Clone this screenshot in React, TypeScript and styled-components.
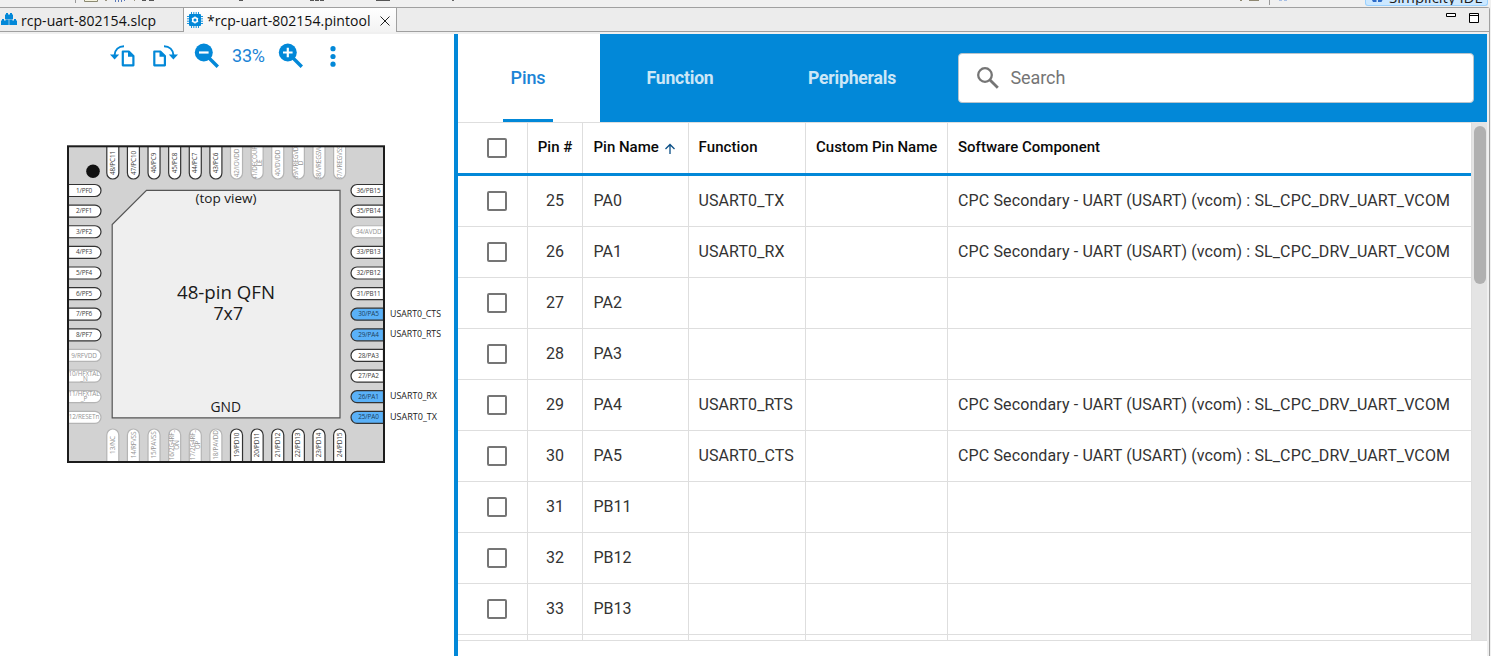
import React from "react";
import styled, { createGlobalStyle, css } from "styled-components";

const BLUE = "#0288d8";
const LINE = "#dedede";

const GlobalStyle = createGlobalStyle`
  * { box-sizing: border-box; }
  html, body { margin: 0; padding: 0; overflow: hidden; background: #fff; }
  svg { display: block; flex: none; }
`;

const Window = styled.div`
  display: flex;
  flex-direction: column;
  width: 1491px;
  height: 656px;
  overflow: hidden;
  background: #f0f0f0;
  font-family: Roboto, "Liberation Sans", sans-serif;
`;

const ToolStrip = styled.div`
  display: flex;
  justify-content: space-between;
  height: 7px;
  flex: none;
  overflow: hidden;
  background: #f0f0f0;
`;

const Perspective = styled.div`
  display: flex;
  align-items: flex-end;
  width: 123px;
  height: 6px;
  margin-right: 3px;
  padding-left: 6px;
  overflow: hidden;
  background: #cce8ff;
  border: 1px solid #99d1ff;
  border-top: 0;
  border-radius: 0 0 3px 3px;
`;

const PerspectiveIcon = styled.svg`
  align-self: flex-start;
`;

const PerspectiveName = styled.span`
  margin: 0 0 -2px 6px;
  font: 15px/20px "Open Sans", "Noto Sans", sans-serif;
  color: #1b1b1b;
  white-space: nowrap;
`;

const Frame = styled.div`
  display: flex;
  flex-direction: column;
  flex: 1;
  min-height: 0;
  width: 1490px;
  border-top: 1px solid #a0a0a0;
  border-right: 1px solid #a0a0a0;
  border-top-right-radius: 3px;
`;

const EditorTabs = styled.div`
  display: flex;
  height: 24px;
  flex: none;
  background: #ececec;
  border-bottom: 1px solid #a0a0a0;
`;

const EditorTab = styled.div<{ $active?: boolean }>`
  display: flex;
  align-items: center;
  height: ${(p) => (p.$active ? 24 : 23)}px;
  width: ${(p) => (p.$active ? 214 : 183)}px;
  padding-left: ${(p) => (p.$active ? 3 : 1)}px;
  font: 14px/20px "Open Sans", "Noto Sans", sans-serif;
  color: #111;
  white-space: nowrap;
  ${(p) =>
    p.$active &&
    css`
      background: linear-gradient(#fff, #f3f3f3);
      border-left: 1px solid #a0a0a0;
      border-right: 1px solid #a0a0a0;
    `}
`;

const TabTitle = styled.span`
  margin-left: 4px;
  padding-top: 2px;
  letter-spacing: 0.04px;
`;

const CloseIcon = styled.svg`
  margin: 1px 0 0 9px;
`;

const WindowControls = styled.div`
  display: flex;
  margin: 5px 10px 0 auto;
  gap: 13px;
`;

const Workspace = styled.div`
  display: flex;
  flex: 1;
  min-height: 0;
  margin: 2px 2px 0 0;
  background: #fff;
`;

const DiagramPane = styled.div`
  width: 454px;
  flex: none;
`;

const Toolbar = styled.div`
  display: flex;
  align-items: center;
  height: 44px;
  padding-left: 110px;
`;

const ToolButton = styled.span<{ $after: number }>`
  display: flex;
  margin-right: ${(p) => p.$after}px;
`;

const ZoomLevel = styled.span`
  width: 46px;
  font-size: 18px;
  line-height: 24px;
  letter-spacing: -0.2px;
  color: #1b84d6;
`;

const PinPane = styled.div`
  display: flex;
  flex-direction: column;
  flex: 1;
  min-width: 0;
  border-left: 4px solid ${BLUE};
`;

const PinHeader = styled.div`
  display: flex;
  height: 88px;
  flex: none;
  background: ${BLUE};
`;

const ViewTab = styled.div<{ $width: number; $active?: boolean }>`
  display: flex;
  flex-direction: column;
  align-items: center;
  width: ${(p) => p.$width}px;
  padding-right: ${(p) => (p.$active ? 2 : 0)}px;
  font-size: ${(p) => (p.$active ? 18 : 17.6)}px;
  font-weight: ${(p) => (p.$active ? 500 : 700)};
  letter-spacing: ${(p) => (p.$active ? -0.1 : -0.22)}px;
  color: ${(p) => (p.$active ? "#1b84d6" : "#cce7f7")};
  background: ${(p) => (p.$active ? "#fff" : "transparent")};
`;

const ViewLabel = styled.span`
  margin-top: auto;
  line-height: 24px;
`;

const ViewUnderline = styled.span<{ $on?: boolean }>`
  width: 50px;
  height: 3px;
  margin-top: 29px;
  background: ${(p) => (p.$on ? BLUE : "transparent")};
`;

const SearchBox = styled.div`
  display: flex;
  align-items: center;
  width: 516px;
  height: 50px;
  margin: 19px 13px 0 auto;
  padding: 0 0 1px 17px;
  gap: 10.5px;
  background: #fff;
  border: 1px solid #b9c4cc;
  border-radius: 4px;
  font-size: 18px;
  line-height: 22px;
  letter-spacing: -0.1px;
  color: #757575;
`;

const TableArea = styled.div`
  display: flex;
  height: 519px;
  flex: none;
  overflow: hidden;
  border-bottom: 1px solid ${LINE};
`;

const Table = styled.div`
  width: 1014px;
  flex: none;
  border-right: 1px solid ${LINE};
`;

const Row = styled.div<{ $head?: boolean }>`
  display: grid;
  grid-template-columns: 70px 55px 106px 117px 142px 1fr;
  height: ${(p) => (p.$head ? 54 : 51)}px;
  border-bottom: ${(p) => (p.$head ? `3px solid ${BLUE}` : `1px solid ${LINE}`)};
  border-top: ${(p) => (p.$head ? `1px solid ${LINE}` : "0")};
  font-size: ${(p) => (p.$head ? 15 : 16)}px;
  font-weight: ${(p) => (p.$head ? 500 : 400)};
  color: ${(p) => (p.$head ? "#0a0a0a" : "#333")};
`;

const Cell = styled.div<{ $center?: boolean }>`
  display: flex;
  align-items: center;
  justify-content: ${(p) => (p.$center ? "center" : "flex-start")};
  min-width: 0;
  padding: 0 0 2px ${(p) => (p.$center ? 0 : 10)}px;
  border-right: 1px solid ${LINE};
  white-space: nowrap;
  &:last-child { border-right: 0; }
`;

const CheckCell = styled(Cell)`
  padding: 0 0 0 29px;
`;

const NameCell = styled(Cell)`
  padding-left: 10.5px;
`;

const FunctionCell = styled(Cell)`
  padding-left: 9.5px;
  letter-spacing: 0.1px;
`;

const ComponentCell = styled(Cell)`
  letter-spacing: 0.125px;
`;

const Checkbox = styled.span`
  width: 20px;
  height: 20px;
  border: 2px solid #757575;
  border-radius: 2px;
`;

const ScrollTrack = styled.div`
  width: 15px;
  padding: 4px 1px 0 2px;
  background: #e4e4e4;
`;

const ScrollThumb = styled.div`
  height: 158px;
  border-radius: 6px;
  background: #b0b0b0;
`;

const PITCH = 20.62;
const USED = new Set(["30/PA5", "29/PA4", "26/PA1", "25/PA0"]);

type Side = "left" | "right" | "top" | "bottom";
type PinDef = { lines: string[]; muted?: boolean };

const pin = (name: string): PinDef =>
  name.startsWith("~") ? { lines: name.slice(1).split("|"), muted: true } : { lines: [name] };

const PINS: Record<Side, PinDef[]> = {
  left: ["1/PF0", "2/PF1", "3/PF2", "4/PF3", "5/PF4", "6/PF5", "7/PF6", "8/PF7", "~9/RFVDD", "~10/HFXTAL|_N", "~11/HFXTAL|_P", "~12/RESETn"].map(pin),
  right: ["36/PB15", "35/PB14", "~34/AVDD", "33/PB13", "32/PB12", "31/PB11", "30/PA5", "29/PA4", "28/PA3", "27/PA2", "26/PA1", "25/PA0"].map(pin),
  top: ["48/PC11", "47/PC10", "46/PC9", "45/PC8", "44/PC7", "43/PC6", "~42/IOVDD", "~41/DECOUP|LE", "~40/DVDD", "~39/VREGVD|D", "~38/VREGSW", "~37/VREGVSS"].map(pin),
  bottom: ["~13/NC", "~14/RFVSS", "~15/PAVSS", "~16/2G4RF_|ON", "~17/2G4RF_|OP", "~18/PAVDD", "19/PD10", "20/PD11", "21/PD12", "22/PD13", "23/PD14", "24/PD15"].map(pin),
};

const SHAPES: Record<Side, string> = {
  left: "M0 -6H26.500a6 6 0 0 1 0 12H0Z",
  right: "M0 -6H-26.500a6 6 0 0 0 0 12H0Z",
  top: "M-6 0V26.500a6 6 0 0 0 12 0V0Z",
  bottom: "M-6 0V-26.500a6 6 0 0 1 12 0V0Z",
};

function Pin({ side, index, def }: { side: Side; index: number; def: PinDef }) {
  const step = index * PITCH;
  const [x, y, tx, ty] = {
    left: [68.5, 190.5 + step, 15.5, 0],
    right: [383.5, 190.5 + step, -15, 0],
    top: [112.8 + step, 146.5, 0, 16.5],
    bottom: [112.8 + step, 461.5, 0, -16.5],
  }[side];
  const vertical = side === "top" || side === "bottom";
  const used = USED.has(def.lines[0]);
  return (
    <g transform={`translate(${x} ${y})`}>
      <clipPath id={`${side}${index}`}>
        <path d={SHAPES[side]} />
      </clipPath>
      <path d={SHAPES[side]} fill={used ? "#5ab1f8" : "#fff"} stroke={def.muted ? "#b4b4b4" : "#333"} strokeWidth={1.2} />
      <g clipPath={`url(#${side}${index})`}>
        <g transform={`translate(${tx} ${ty})${vertical ? " rotate(-90)" : ""}`} fontSize={6.4} letterSpacing={-0.15} textAnchor="middle" fill={def.muted ? "#949494" : used ? "#1d3f5c" : "#3c3c3c"}>
          {def.lines.map((line, i) => (
            <text key={i} y={def.lines.length > 1 ? -0.5 + i * 5.2 : 2.1}>
              {line}
            </text>
          ))}
        </g>
      </g>
    </g>
  );
}

function Label({ x, y, size, width, children }: { x: number; y: number; size: number; width: number; children: string }) {
  return (
    <text x={x} y={y} fontSize={size} textLength={width} lengthAdjust="spacingAndGlyphs" fill="#1a1a1a">
      {children}
    </text>
  );
}

function ChipDiagram() {
  return (
    <svg width="454" height="420" viewBox="0 78 454 420" fontFamily='"Open Sans", "Noto Sans", sans-serif'>
      <rect x="68" y="146.500" width="316" height="315.500" fill="#d2d2d2" />
      {(Object.keys(PINS) as Side[]).map((side) =>
        PINS[side].map((def, i) => <Pin key={side + i} side={side} index={i} def={def} />)
      )}
      <rect x="68" y="146.300" width="316" height="315.700" fill="none" stroke="#1c1c1c" strokeWidth="2" />
      <path d="M146.500 190.300H340V417.800H112.200V224.500Z" fill="#efefef" stroke="#555" strokeWidth="1.200" />
      <circle cx="93" cy="171.300" r="6.800" fill="#111" />
      <Label x={195.5} y={203} size={13} width={61}>(top view)</Label>
      <Label x={177} y={299} size={18.6} width={98}>48-pin QFN</Label>
      <Label x={213.5} y={320} size={18.6} width={29.5}>7x7</Label>
      <Label x={210.500} y={412} size={14} width={30.5}>GND</Label>
      <Label x={390} y={317} size={8.6} width={51}>USART0_CTS</Label>
      <Label x={390} y={337} size={8.6} width={51}>USART0_RTS</Label>
      <Label x={390} y={399} size={8.6} width={47}>USART0_RX</Label>
      <Label x={390} y={420} size={8.6} width={47}>USART0_TX</Label>
    </svg>
  );
}

const RotateIcon = ({ flip }: { flip?: boolean }) => (
  <svg width="26" height="24" viewBox="0 0 26 24">
    <g transform={flip ? "translate(25 0) scale(-1 1)" : undefined} fill="none" stroke={BLUE}>
      <path d="M14 2.300C8.500 2.300 5 6 4.600 11" strokeWidth="2" />
      <path d="M0 10.500H9.200L4.600 15.600Z" fill={BLUE} stroke="none" />
    </g>
    <g transform={flip ? "translate(-11.500 0)" : undefined}>
      <path d="M12.800 7.500H18.800L23.400 12V21.300H12.800Z" fill="none" stroke={BLUE} strokeWidth="2.200" strokeLinejoin="round" />
      <path d="M18 7V12.800H23.800Z" fill={BLUE} />
    </g>
  </svg>
);

const MagnifierIcon = ({ plus }: { plus?: boolean }) => (
  <svg width="26" height="26" viewBox="0 0 26 26">
    <path d="M14 14L23.800 23.800" stroke={BLUE} strokeWidth="3.400" />
    <circle cx="9.800" cy="9.500" r="9" fill={BLUE} />
    <path d={plus ? "M5 9.500H14.600M9.800 4.700V14.300" : "M5 9.500H14.600"} stroke="#fff" strokeWidth="2.200" />
  </svg>
);

const ChipIcon = () => (
  <svg width="16" height="16" viewBox="0 0 16 16">
    <path d="M4.500 0V16M6.800 0V16M9.200 0V16M11.500 0V16M0 4.500H16M0 6.800H16M0 9.200H16M0 11.500H16" stroke={BLUE} strokeWidth="0.900" />
    <rect x="2" y="2" width="12" height="12" rx="1" fill={BLUE} />
    <circle cx="8" cy="8" r="2.300" fill="none" stroke="#fff" strokeWidth="1.500" />
    <path d="M8 4.400V5.500M8 10.500V11.600M4.900 6.200L5.900 6.800M10.100 9.200L11.100 9.800M4.900 9.800L5.900 9.200M10.100 6.800L11.100 6.200" stroke="#fff" strokeWidth="1.300" />
  </svg>
);

const BlocksIcon = () => (
  <svg width="16" height="13" viewBox="0 0 16 13">
    <path d="M4 1.500H5V0H7V1.500H9V0H11V1.500H12V6.200H4Z" fill={BLUE} />
    <path d="M0 7.500H1V6H3V7.500H4.700V6.500H7.700V12H0ZM8.300 6.500H11.300V7.500H13V6H15V7.500H16V12H8.300Z" fill={BLUE} />
  </svg>
);

const ROWS: [number, string, string][] = [
  [25, "PA0", "USART0_TX"],
  [26, "PA1", "USART0_RX"],
  [27, "PA2", ""],
  [28, "PA3", ""],
  [29, "PA4", "USART0_RTS"],
  [30, "PA5", "USART0_CTS"],
  [31, "PB11", ""],
  [32, "PB12", ""],
  [33, "PB13", ""],
];

const SortIcon = () => (
  <svg width="12" height="12" viewBox="0 0 12 12">
    <path d="M6 11V1.500M1.500 6L6 1.500L10.500 6" fill="none" stroke="#0b4f86" strokeWidth="1.300" />
  </svg>
);

const SortableLabel = styled.span`
  display: flex;
  align-items: center;
  gap: 5.5px;
  svg { margin-top: 4px; }
`;

export default function App() {
  return (
    <>
      <GlobalStyle />
      <Window>
        <ToolStrip>
          <svg width="1300" height="7" viewBox="0 0 1300 7">
            <path d="M75 0H76V3H75ZM1269 0H1270V5H1269Z" fill="#999" />
            <path d="M84.500 0V1.500H97.500V0" fill="#f6f4e0" stroke="#8c8a72" />
            <path d="M105 0H107V1H105ZM134 0H135V1H134Z" fill="#9a9480" />
            <path d="M115 0H116V2H115ZM118 0H119V2H118ZM121 0H122V2H121ZM124 0H125V1H124Z" fill="#5a78b8" />
            <path d="M142 0H146V1H142ZM149 0H154V1H149ZM310 0H314V1H310ZM315 0H319V1H315ZM320 0H324V1H320ZM376 0H390V1H376ZM239 0H243V1H239Z" fill="#555" />
            <path d="M452 0H454V1H452Z" fill="#666" />
            <path d="M1249 0H1259V1H1249ZM1240 0H1242V1H1240Z" fill="#8f8872" />
            <path d="M1279 0H1282V1H1279ZM1284 0H1287V1H1284Z" fill="#a9c0e4" />
          </svg>
          <Perspective>
            <PerspectiveIcon width="11" height="2" viewBox="0 0 11 2">
              <path d="M0 0H4.500V2H1ZM6 0H10.500L9.500 2H6Z" fill="#2c6bc9" />
            </PerspectiveIcon>
            <PerspectiveName>Simplicity IDE</PerspectiveName>
          </Perspective>
        </ToolStrip>
        <Frame>
          <EditorTabs>
            <EditorTab>
              <BlocksIcon />
              <TabTitle>rcp-uart-802154.slcp</TabTitle>
            </EditorTab>
            <EditorTab $active>
              <ChipIcon />
              <TabTitle>*rcp-uart-802154.pintool</TabTitle>
              <CloseIcon width="10" height="10" viewBox="0 0 10 10">
                <path d="M0.500 0.500L9.500 9.500M9.500 0.500L0.500 9.500" stroke="#222" strokeWidth="1" />
              </CloseIcon>
            </EditorTab>
            <WindowControls>
              <svg width="10" height="12" viewBox="0 0 10 12">
                <path d="M0.500 0.500H9.500V3.500H0.500Z" fill="#fff" stroke="#000" />
              </svg>
              <svg width="10" height="12" viewBox="0 0 10 12">
                <path d="M0.500 0.500H9.500V9.500H0.500ZM0 2.500H10" fill="#fff" stroke="#000" />
              </svg>
            </WindowControls>
          </EditorTabs>
          <Workspace>
            <DiagramPane>
              <Toolbar>
                <ToolButton $after={17}><RotateIcon /></ToolButton>
                <ToolButton $after={15}><RotateIcon flip /></ToolButton>
                <ToolButton $after={12}><MagnifierIcon /></ToolButton>
                <ZoomLevel>33%</ZoomLevel>
                <ToolButton $after={26}><MagnifierIcon plus /></ToolButton>
                <svg width="6" height="21" viewBox="0 0 6 21">
                  <g fill={BLUE}>
                    <circle cx="3" cy="2.700" r="2.600" />
                    <circle cx="3" cy="10.500" r="2.600" />
                    <circle cx="3" cy="18.200" r="2.600" />
                  </g>
                </svg>
              </Toolbar>
              <ChipDiagram />
            </DiagramPane>
            <PinPane>
              <PinHeader>
                <ViewTab $width={142} $active><ViewLabel>Pins</ViewLabel><ViewUnderline $on /></ViewTab>
                <ViewTab $width={160}><ViewLabel>Function</ViewLabel><ViewUnderline /></ViewTab>
                <ViewTab $width={184}><ViewLabel>Peripherals</ViewLabel><ViewUnderline /></ViewTab>
                <SearchBox>
                  <svg width="24" height="24" viewBox="0 0 24 24">
                    <circle cx="9" cy="9" r="6.800" fill="none" stroke="#757575" strokeWidth="2.300" />
                    <path d="M14 14L21.800 21.800" stroke="#757575" strokeWidth="2.800" />
                  </svg>
                  Search
                </SearchBox>
              </PinHeader>
              <TableArea>
                <Table>
                  <Row $head>
                    <CheckCell><Checkbox /></CheckCell>
                    <Cell $center>Pin #</Cell>
                    <NameCell><SortableLabel>Pin Name <SortIcon /></SortableLabel></NameCell>
                    <FunctionCell>Function</FunctionCell>
                    <Cell>Custom Pin Name</Cell>
                    <Cell>Software Component</Cell>
                  </Row>
                  {ROWS.map(([num, name, fn]) => (
                    <Row key={num}>
                      <CheckCell><Checkbox /></CheckCell>
                      <Cell $center>{num}</Cell>
                      <NameCell>{name}</NameCell>
                      <FunctionCell>{fn}</FunctionCell>
                      <Cell />
                      <ComponentCell>{fn && "CPC Secondary - UART (USART) (vcom) : SL_CPC_DRV_UART_VCOM"}</ComponentCell>
                    </Row>
                  ))}
                  <Row><Cell /><Cell /><Cell /><Cell /><Cell /><Cell /></Row>
                </Table>
                <ScrollTrack><ScrollThumb /></ScrollTrack>
              </TableArea>
            </PinPane>
          </Workspace>
        </Frame>
      </Window>
    </>
  );
}
